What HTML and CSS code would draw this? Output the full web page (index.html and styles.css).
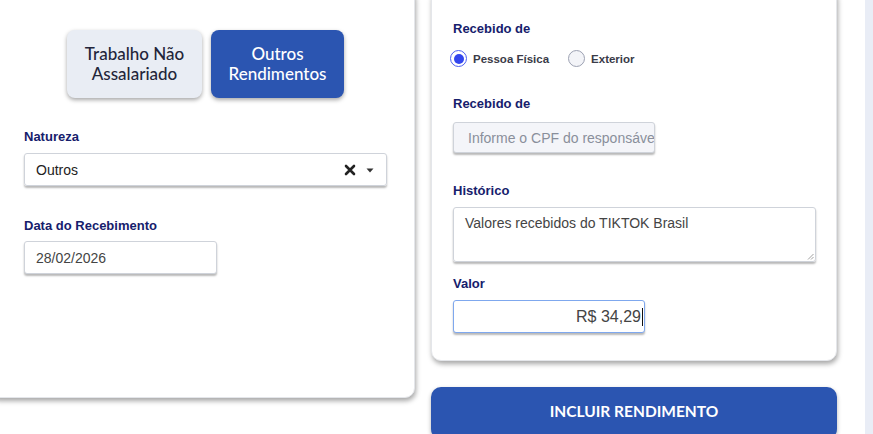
FILE: index.html
```html
<!DOCTYPE html>
<html lang="pt-BR">
<head>
<meta charset="utf-8">
<title>Rendimentos</title>
<link rel="stylesheet" href="styles.css">
</head>
<body>
<div class="page">
  <section class="card card-left">
    <div class="tabs">
      <button class="tab">Trabalho Não<br>Assalariado</button>
      <button class="tab tab-active">Outros<br>Rendimentos</button>
    </div>
    <label class="label lbl-natureza">Natureza</label>
    <div class="select">
      <span class="select-value">Outros</span>
      <span class="select-icons">
        <svg class="x-icon" width="12" height="12" viewBox="0 0 12 12"><path d="M2 2 L10 10 M10 2 L2 10" stroke="#222" stroke-width="2.6" stroke-linecap="round"/></svg>
        <svg class="caret" width="8" height="5" viewBox="0 0 8 5"><path d="M0.5 0.5 H7.5 L4 4.5 Z" fill="#333"/></svg>
      </span>
    </div>
    <label class="label lbl-data">Data do Recebimento</label>
    <div class="input input-date">28/02/2026</div>
  </section>

  <div class="right-col">
    <section class="card card-right">
      <label class="label">Recebido de</label>
      <div class="radios">
        <span class="radio radio-on"><span class="dot"></span></span>
        <span class="radio-text">Pessoa Física</span>
        <span class="radio radio-off"></span>
        <span class="radio-text">Exterior</span>
      </div>
      <label class="label lbl-recebido2">Recebido de</label>
      <div class="input input-cpf"><span class="placeholder">Informe o CPF do responsáve</span></div>
      <label class="label lbl-hist">Histórico</label>
      <div class="textarea">Valores recebidos do TIKTOK Brasil
        <svg class="grip" width="7" height="7" viewBox="0 0 7 7"><path d="M6.5 1 L1 6.5 M6.5 4 L4 6.5" stroke="#888" stroke-width="0.8"/></svg>
      </div>
      <label class="label lbl-valor">Valor</label>
      <div class="input input-valor">R$ 34,29<span class="cursor"></span></div>
    </section>
    <button class="btn-incluir">INCLUIR RENDIMENTO</button>
  </div>

  <div class="side-strip"></div>
</div>
</body>
</html>
```

FILE: styles.css
```css
* { box-sizing: border-box; }
html, body { margin: 0; padding: 0; background: #ffffff; overflow: hidden; }
body { font-family: "Liberation Sans", Arial, sans-serif; }

.page {
  display: flex;
  align-items: flex-start;
  height: 434px;
}

.card {
  background: #ffffff;
  border: 1px solid #e4e6ea;
  border-radius: 10px;
  box-shadow: 1px 3px 5px rgba(0, 0, 0, 0.35);
  display: flex;
  flex-direction: column;
  align-items: flex-start;
}

.card-left {
  margin: -12px 0 0 -12px;
  width: 427px;
  height: 410px;
  padding: 41px 0 0 35px;
}

.tabs {
  display: flex;
  gap: 9px;
  margin-left: 43px;
}

.tab {
  width: 135px;
  height: 68px;
  border: none;
  border-radius: 8px;
  background: #e9edf4;
  color: #23253a;
  font-family: Lato, "Liberation Sans", sans-serif;
  font-size: 17px;
  font-weight: 500;
  line-height: 20px;
  box-shadow: 0 2px 4px rgba(0, 0, 0, 0.35);
  padding: 0;
}
.tab-active {
  width: 133px;
  background: #2b55b1;
  color: #ffffff;
}

.label {
  display: block;
  font-size: 13px;
  font-weight: bold;
  color: #16206c;
  line-height: 16px;
}
.lbl-natureza { margin-top: 31px; }
.lbl-data { margin-top: 32px; }

.select {
  margin-top: 8px;
  width: 363px;
  height: 33px;
  border: 1px solid #cfd3da;
  border-radius: 3px;
  box-shadow: 0 2px 2px rgba(0, 0, 0, 0.28);
  display: flex;
  align-items: center;
  justify-content: space-between;
  padding: 0 12px 0 11px;
  font-size: 14px;
  color: #222;
}
.select-icons { display: flex; align-items: center; gap: 10px; }
.x-icon { display: block; }
.caret { display: block; margin-top: 1px; }

.input {
  border: 1px solid #cfd3da;
  border-radius: 3px;
  box-shadow: 0 2px 2px rgba(0, 0, 0, 0.28);
  display: flex;
  align-items: center;
  font-size: 14px;
  color: #444;
  background: #fff;
}
.input-date {
  margin-top: 7px;
  width: 193px;
  height: 33px;
  padding-left: 11px;
}

.right-col {
  margin-left: 16px;
  width: 406px;
  display: flex;
  flex-direction: column;
}

.card-right {
  margin-top: -12px;
  height: 373px;
  padding: 32px 0 0 21px;
}

.radios {
  display: flex;
  align-items: center;
  margin-top: 13px;
  margin-left: -3px;
}
.radio {
  width: 17px;
  height: 17px;
  border-radius: 50%;
  display: flex;
  align-items: center;
  justify-content: center;
}
.radio-on { border: 1.5px solid #4c5ff0; background: #fff; }
.radio-on .dot { width: 10px; height: 10px; border-radius: 50%; background: #3346ee; }
.radio-off { border: 1px solid #9ca1b2; background: #f3f4f8; margin-left: 19px; }
.radio-text {
  font-size: 11.5px;
  font-weight: bold;
  color: #3a3b48;
  margin-left: 6px;
}

.lbl-recebido2 { margin-top: 29px; }
.input-cpf {
  margin-top: 10px;
  width: 202px;
  height: 31px;
  background: #f4f5f9;
  padding-left: 14px;
  overflow: hidden;
  white-space: nowrap;
}
.placeholder { color: #8a8f9b; }

.lbl-hist { margin-top: 30px; }
.textarea {
  position: relative;
  margin-top: 8px;
  width: 363px;
  height: 55px;
  border: 1px solid #cfd3da;
  border-radius: 3px;
  box-shadow: 0 2px 2px rgba(0, 0, 0, 0.28);
  padding: 7px 11px;
  font-size: 14px;
  color: #444;
}
.grip { position: absolute; right: 1px; bottom: 1px; }

.lbl-valor { margin-top: 14px; }
.input-valor {
  margin-top: 8px;
  width: 192px;
  height: 33px;
  border: 1px solid #7fa8ee;
  justify-content: flex-end;
  padding-right: 1px;
  font-size: 16px;
  color: #444;
}
.cursor { display: inline-block; width: 1px; height: 18px; background: #111; margin-left: 1px; }

.btn-incluir {
  margin-top: 26px;
  height: 52px;
  border: none;
  border-radius: 10px;
  background: #2b55b1;
  color: #fff;
  font-family: Lato, "Liberation Sans", sans-serif;
  font-weight: bold;
  font-size: 15.5px;
  padding: 0 0 5px 0;
  box-shadow: 0 2px 4px rgba(0, 0, 0, 0.3);
}

.side-strip {
  margin-left: 28px;
  flex: 1;
  align-self: stretch;
  background: #e9edf6;
}
```
